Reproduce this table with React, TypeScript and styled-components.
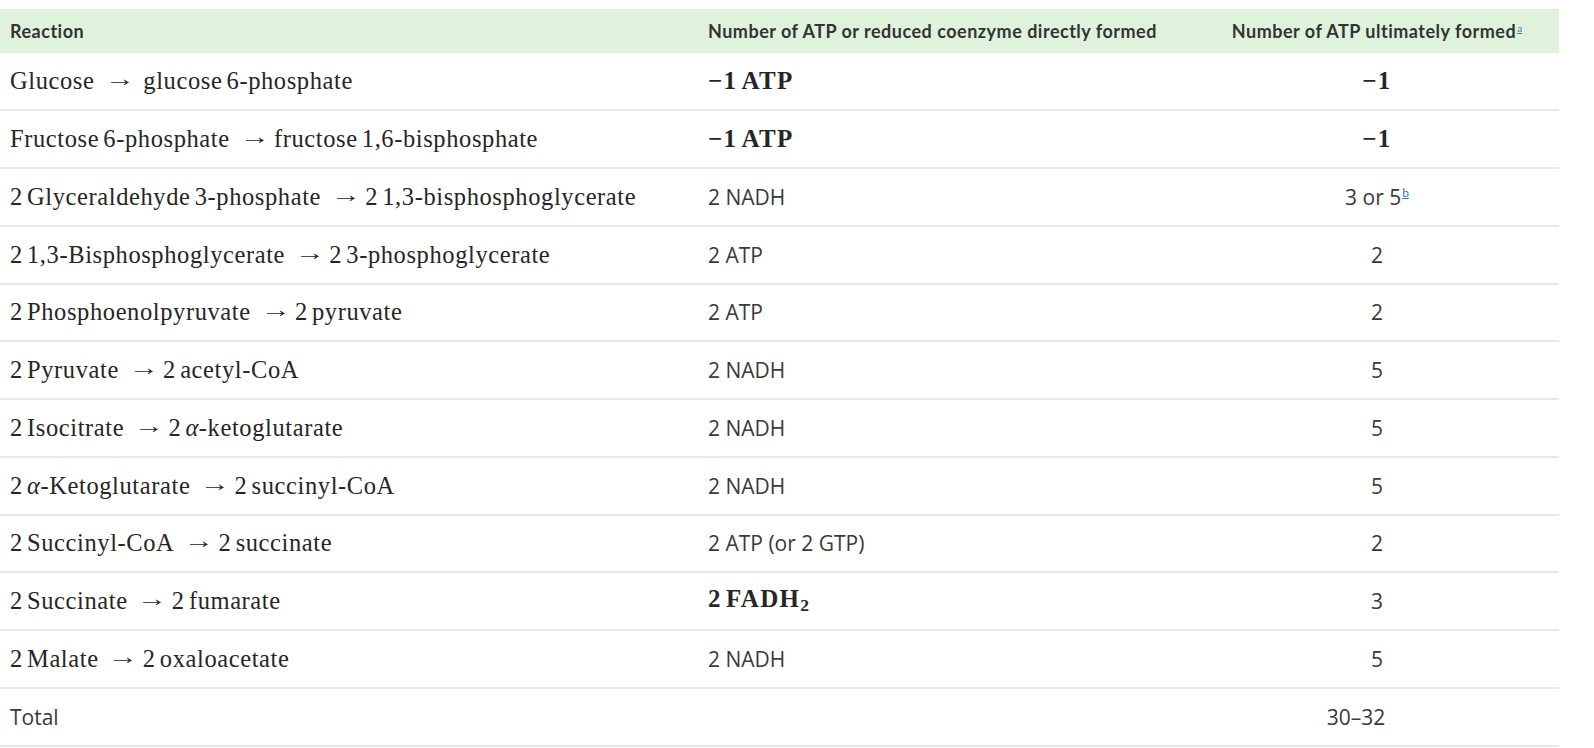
import React from "react";
import { styled, createGlobalStyle } from "styled-components";

const GlobalStyle = createGlobalStyle`
  html, body {
    margin: 0;
    padding: 0;
    background: #ffffff;
  }
  body {
    font-family: "Lato", "Open Sans", sans-serif;
    color: #333333;
  }
`;

type Align = "left" | "center";

interface IRow {
  reaction: React.ReactNode;
  direct: React.ReactNode;
  ultimate: React.ReactNode;
  shift?: number;
}

const Page = styled.div`
  padding-top: 9px;
`;

const Table = styled.table`
  width: 1559px;
  border-collapse: collapse;
  table-layout: fixed;
`;

const HeadCell = styled.th<{ $align?: Align; $pad?: number }>`
  height: 43px;
  padding: 0 ${(p) => (p.$align === "center" ? 0 : 10)}px 0
    ${(p) => (p.$align === "center" ? 0 : p.$pad ?? 10)}px;
  background: #dff3dc;
  color: #333333;
  font-family: "Lato", sans-serif;
  font-weight: 700;
  font-size: 18px;
  letter-spacing: 0.5px;
  text-align: ${(p) => p.$align ?? "left"};
  vertical-align: middle;
  white-space: nowrap;
  border-bottom: 1px solid #e4ece2;
`;

const Row = styled.tr`
  height: 57.75px;
  border-bottom: 2px solid #e8e8e8;
`;

const Cell = styled.td<{ $align?: Align; $pad?: number; $shift?: number }>`
  padding: 0 ${(p) => (p.$align === "center" ? p.$shift ?? 0 : 10)}px 0
    ${(p) => (p.$align === "center" ? 0 : p.$pad ?? 10)}px;
  font-family: "Open Sans", "Lato", sans-serif;
  font-size: 21px;
  color: #3a3a3a;
  text-align: ${(p) => p.$align ?? "left"};
  vertical-align: middle;
  white-space: nowrap;
`;

const MathText = styled.span<{ $bold?: boolean }>`
  font-family: "Liberation Serif", "Times New Roman", serif;
  font-size: ${(p) => (p.$bold ? "25px" : "24.5px")};
  font-weight: ${(p) => (p.$bold ? 700 : 400)};
  color: #262626;
  letter-spacing: ${(p) => (p.$bold ? "1.3px" : "0.6px")};
`;

const NumPart = styled.span`
  margin-right: 0.17em;
`;

const ThinSpace = styled.span`
  display: inline-block;
  width: 0.17em;
`;

const ArrowGlyph = styled.span<{ $wide?: boolean }>`
  display: inline-block;
  margin: 0 ${(p) => (p.$wide ? "0.5em" : "0.35em")} 0
    ${(p) => (p.$wide ? "0.6em" : "0.55em")};
  font-size: 0.95em;
  letter-spacing: 0;
  transform: translateY(-3px) scaleX(1.3);
`;

const Greek = styled.span`
  font-style: italic;
`;

const Sub = styled.sub`
  font-size: 0.7em;
  vertical-align: -0.25em;
`;

const FootRef = styled.a<{ $head?: boolean }>`
  color: #2f7fb5;
  text-decoration: underline;
  font-family: "Lato", sans-serif;
  font-weight: 400;
  letter-spacing: 0;
  font-size: ${(p) => (p.$head ? "10px" : "12px")};
  vertical-align: ${(p) => (p.$head ? "6px" : "8px")};
  margin-left: 1px;
`;

const Arrow = ({ wide }: { wide?: boolean }) => (
  <ArrowGlyph $wide={wide}>→</ArrowGlyph>
);

const Num = ({ n }: { n: string }) => <NumPart>{n}</NumPart>;

const Thin = () => <ThinSpace />;

const rows: IRow[] = [
  {
    reaction: (
      <MathText>
        Glucose
        <Arrow wide />
        glucose<Thin />6-phosphate
      </MathText>
    ),
    direct: <MathText $bold>−1<Thin />ATP</MathText>,
    ultimate: <MathText $bold>−1</MathText>,
  },
  {
    reaction: (
      <MathText>
        Fructose<Thin />6-phosphate
        <Arrow />
        fructose<Thin />1,6-bisphosphate
      </MathText>
    ),
    direct: <MathText $bold>−1<Thin />ATP</MathText>,
    ultimate: <MathText $bold>−1</MathText>,
  },
  {
    reaction: (
      <MathText>
        <Num n="2" />Glyceraldehyde<Thin />3-phosphate
        <Arrow />
        <Num n="2" />1,3-bisphosphoglycerate
      </MathText>
    ),
    direct: "2 NADH",
    ultimate: (
      <>
        3 or 5<FootRef href="#b">b</FootRef>
      </>
    ),
  },
  {
    reaction: (
      <MathText>
        <Num n="2" />1,3-Bisphosphoglycerate
        <Arrow />
        <Num n="2" />3-phosphoglycerate
      </MathText>
    ),
    direct: "2 ATP",
    ultimate: "2",
  },
  {
    reaction: (
      <MathText>
        <Num n="2" />Phosphoenolpyruvate
        <Arrow />
        <Num n="2" />pyruvate
      </MathText>
    ),
    direct: "2 ATP",
    ultimate: "2",
  },
  {
    reaction: (
      <MathText>
        <Num n="2" />Pyruvate
        <Arrow />
        <Num n="2" />acetyl-CoA
      </MathText>
    ),
    direct: "2 NADH",
    ultimate: "5",
  },
  {
    reaction: (
      <MathText>
        <Num n="2" />Isocitrate
        <Arrow />
        <Num n="2" />
        <Greek>α</Greek>-ketoglutarate
      </MathText>
    ),
    direct: "2 NADH",
    ultimate: "5",
  },
  {
    reaction: (
      <MathText>
        <Num n="2" />
        <Greek>α</Greek>-Ketoglutarate
        <Arrow />
        <Num n="2" />succinyl-CoA
      </MathText>
    ),
    direct: "2 NADH",
    ultimate: "5",
  },
  {
    reaction: (
      <MathText>
        <Num n="2" />Succinyl-CoA
        <Arrow />
        <Num n="2" />succinate
      </MathText>
    ),
    direct: "2 ATP (or 2 GTP)",
    ultimate: "2",
  },
  {
    reaction: (
      <MathText>
        <Num n="2" />Succinate
        <Arrow />
        <Num n="2" />fumarate
      </MathText>
    ),
    direct: (
      <MathText $bold>
        2<Thin />FADH<Sub>2</Sub>
      </MathText>
    ),
    ultimate: "3",
  },
  {
    reaction: (
      <MathText>
        <Num n="2" />Malate
        <Arrow />
        <Num n="2" />oxaloacetate
      </MathText>
    ),
    direct: "2 NADH",
    ultimate: "5",
  },
  {
    reaction: "Total",
    direct: "",
    ultimate: "30–32",
    shift: 42,
  },
];

const App = () => {
  return (
    <Page>
      <GlobalStyle />
      <Table>
        <colgroup>
          <col style={{ width: 697 }} />
          <col style={{ width: 498 }} />
          <col style={{ width: 364 }} />
        </colgroup>
        <thead>
          <tr>
            <HeadCell>Reaction</HeadCell>
            <HeadCell $pad={11}>
              Number of ATP or reduced coenzyme directly formed
            </HeadCell>
            <HeadCell $align="center">
              Number of ATP ultimately formed
              <FootRef href="#a" $head>
                a
              </FootRef>
            </HeadCell>
          </tr>
        </thead>
        <tbody>
          {rows.map((r, i) => (
            <Row key={i}>
              <Cell>{r.reaction}</Cell>
              <Cell $pad={11}>{r.direct}</Cell>
              <Cell $align="center" $shift={r.shift}>
                {r.ultimate}
              </Cell>
            </Row>
          ))}
        </tbody>
      </Table>
    </Page>
  );
};

export default App;
